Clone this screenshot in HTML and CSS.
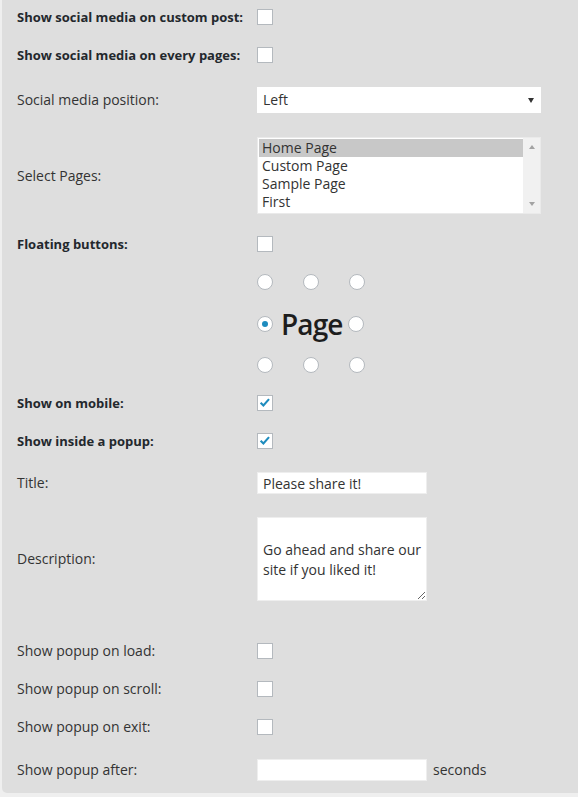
FILE: index.html
```
<!DOCTYPE html>
<html>
<head>
<meta charset="utf-8">
<link rel="stylesheet" href="styles.css">
</head>
<body>
<div class="panel">
  <div class="row">
    <div class="label bold">Show social media on custom post:</div>
    <div class="field"><span class="cb"></span></div>
  </div>
  <div class="row">
    <div class="label bold">Show social media on every pages:</div>
    <div class="field"><span class="cb"></span></div>
  </div>
  <div class="row row-pad2">
    <div class="label">Social media position:</div>
    <div class="field">
      <div class="select">Left<span class="arrow"></span></div>
    </div>
  </div>
  <div class="row row-pad2">
    <div class="label">Select Pages:</div>
    <div class="field">
      <div class="listbox">
        <div class="items">
          <div class="item selected">Home Page</div>
          <div class="item">Custom Page</div>
          <div class="item">Sample Page</div>
          <div class="item">First</div>
        </div>
        <div class="scrollbar"><span class="up"></span><span class="down"></span></div>
      </div>
    </div>
  </div>
  <div class="row">
    <div class="label bold">Floating buttons:</div>
    <div class="field"><span class="cb"></span></div>
  </div>
  <div class="row">
    <div class="label"></div>
    <div class="field">
      <div class="grid">
        <div class="grow"><span class="rb"></span><span class="rb"></span><span class="rb"></span></div>
        <div class="grow mid"><span class="rb on"></span><span class="page">Page</span><span class="rb"></span></div>
        <div class="grow"><span class="rb"></span><span class="rb"></span><span class="rb"></span></div>
      </div>
    </div>
  </div>
  <div class="row">
    <div class="label bold">Show on mobile:</div>
    <div class="field"><span class="cb"><svg viewBox="0 0 16 16" width="14" height="14"><path d="M3 7.6 L6.2 10.8 L12.6 3.6" fill="none" stroke="#1e8cbe" stroke-width="2.4"/></svg></span></div>
  </div>
  <div class="row">
    <div class="label bold">Show inside a popup:</div>
    <div class="field"><span class="cb"><svg viewBox="0 0 16 16" width="14" height="14"><path d="M3 7.6 L6.2 10.8 L12.6 3.6" fill="none" stroke="#1e8cbe" stroke-width="2.4"/></svg></span></div>
  </div>
  <div class="row row-pad1">
    <div class="label">Title:</div>
    <div class="field"><input class="text" type="text" value="Please share it!"></div>
  </div>
  <div class="row row-pad1">
    <div class="label">Description:</div>
    <div class="field"><textarea class="area">

Go ahead and share our site if you liked it!</textarea></div>
  </div>
  <div class="row row-gap">
    <div class="label">Show popup on load:</div>
    <div class="field"><span class="cb"></span></div>
  </div>
  <div class="row">
    <div class="label">Show popup on scroll:</div>
    <div class="field"><span class="cb"></span></div>
  </div>
  <div class="row">
    <div class="label">Show popup on exit:</div>
    <div class="field"><span class="cb"></span></div>
  </div>
  <div class="row row-pad2">
    <div class="label">Show popup after:</div>
    <div class="field"><input class="text" type="text" value=""><span class="unit">seconds</span></div>
  </div>
</div>
</body>
</html>
```
FILE: styles.css
```
html, body {
  margin: 0;
  padding: 0;
  background: #efefef;
}
body {
  font-family: "Open Sans", "DejaVu Sans", sans-serif;
  font-size: 14px;
  color: #333;
}
.panel {
  margin-left: 2px;
  background: #dedede;
  border-bottom-left-radius: 5px;
  padding: 9px 0 12px 15px;
  display: flex;
  flex-direction: column;
  gap: 22px;
}
.row {
  display: flex;
  align-items: center;
  line-height: 16px;
}
.row-pad2 { padding-top: 2px; }
.row-pad1 { padding-top: 1px; }
.row-gap { margin-top: 20px; }
.label {
  width: 240px;
  flex: none;
}
.bold {
  font-weight: bold;
  font-size: 13px;
  color: #23282d;
}
.field {
  display: flex;
  align-items: center;
}
.cb {
  width: 14px;
  height: 14px;
  border: 1px solid #b4b9be;
  background: #fff;
  display: flex;
  align-items: center;
  justify-content: center;
}
.select {
  position: relative;
  width: 284px;
  height: 26px;
  box-sizing: border-box;
  background: #fff;
  padding-left: 6px;
  display: flex;
  align-items: center;
  color: #333;
}
.arrow {
  position: absolute;
  right: 7px;
  top: 11px;
  width: 0;
  height: 0;
  border-left: 3.5px solid transparent;
  border-right: 3.5px solid transparent;
  border-top: 5px solid #333;
}
.listbox {
  width: 284px;
  height: 77px;
  box-sizing: border-box;
  background: #fff;
  border: 1px solid #eaeaea;
  display: flex;
}
.items {
  flex: 1;
  padding: 1px 0 0 1px;
}
.item {
  height: 18px;
  line-height: 18px;
  padding-left: 3px;
  color: #333;
}
.item.selected {
  background: #c8c8c8;
}
.scrollbar {
  width: 17px;
  background: #f1f1f1;
  display: flex;
  flex-direction: column;
  justify-content: space-between;
  align-items: center;
  padding: 7px 0 7px;
}
.up, .down {
  width: 0;
  height: 0;
  border-left: 3.5px solid transparent;
  border-right: 3.5px solid transparent;
}
.up { border-bottom: 4px solid #a3a3a3; }
.down { border-top: 4px solid #a3a3a3; }
.grid {
  display: flex;
  flex-direction: column;
}
.grow {
  display: flex;
  align-items: center;
  gap: 30px;
}
.grow.mid {
  gap: 0;
  margin: 17px 0 16px;
  height: 34px;
}
.rb {
  width: 14px;
  height: 14px;
  border: 1px solid #b4b9be;
  border-radius: 50%;
  background: #fff;
  display: flex;
  align-items: center;
  justify-content: center;
}
.rb.on::before {
  content: "";
  width: 6px;
  height: 6px;
  border-radius: 50%;
  background: #1e8cbe;
}
.page {
  font-size: 28px;
  font-weight: 600;
  color: #1d1d1d;
  margin: 0 5px 0 8px;
  line-height: 34px;
  letter-spacing: -0.9px;
}
.text {
  width: 170px;
  height: 22px;
  box-sizing: border-box;
  border: 1px solid #eeeeee;
  background: #fff;
  padding: 0 5px;
  font-family: "Open Sans", "DejaVu Sans", sans-serif;
  font-size: 14px;
  color: #333;
  outline: none;
  margin: 0;
}
.area {
  width: 170px;
  height: 84px;
  box-sizing: border-box;
  border: 1px solid #eeeeee;
  background: #fff;
  padding: 2px 5px;
  font-family: "Open Sans", "DejaVu Sans", sans-serif;
  font-size: 14px;
  line-height: 20px;
  color: #333;
  margin: 0;
  overflow: hidden;
  outline: none;
}
.unit {
  margin-left: 6px;
}
```
